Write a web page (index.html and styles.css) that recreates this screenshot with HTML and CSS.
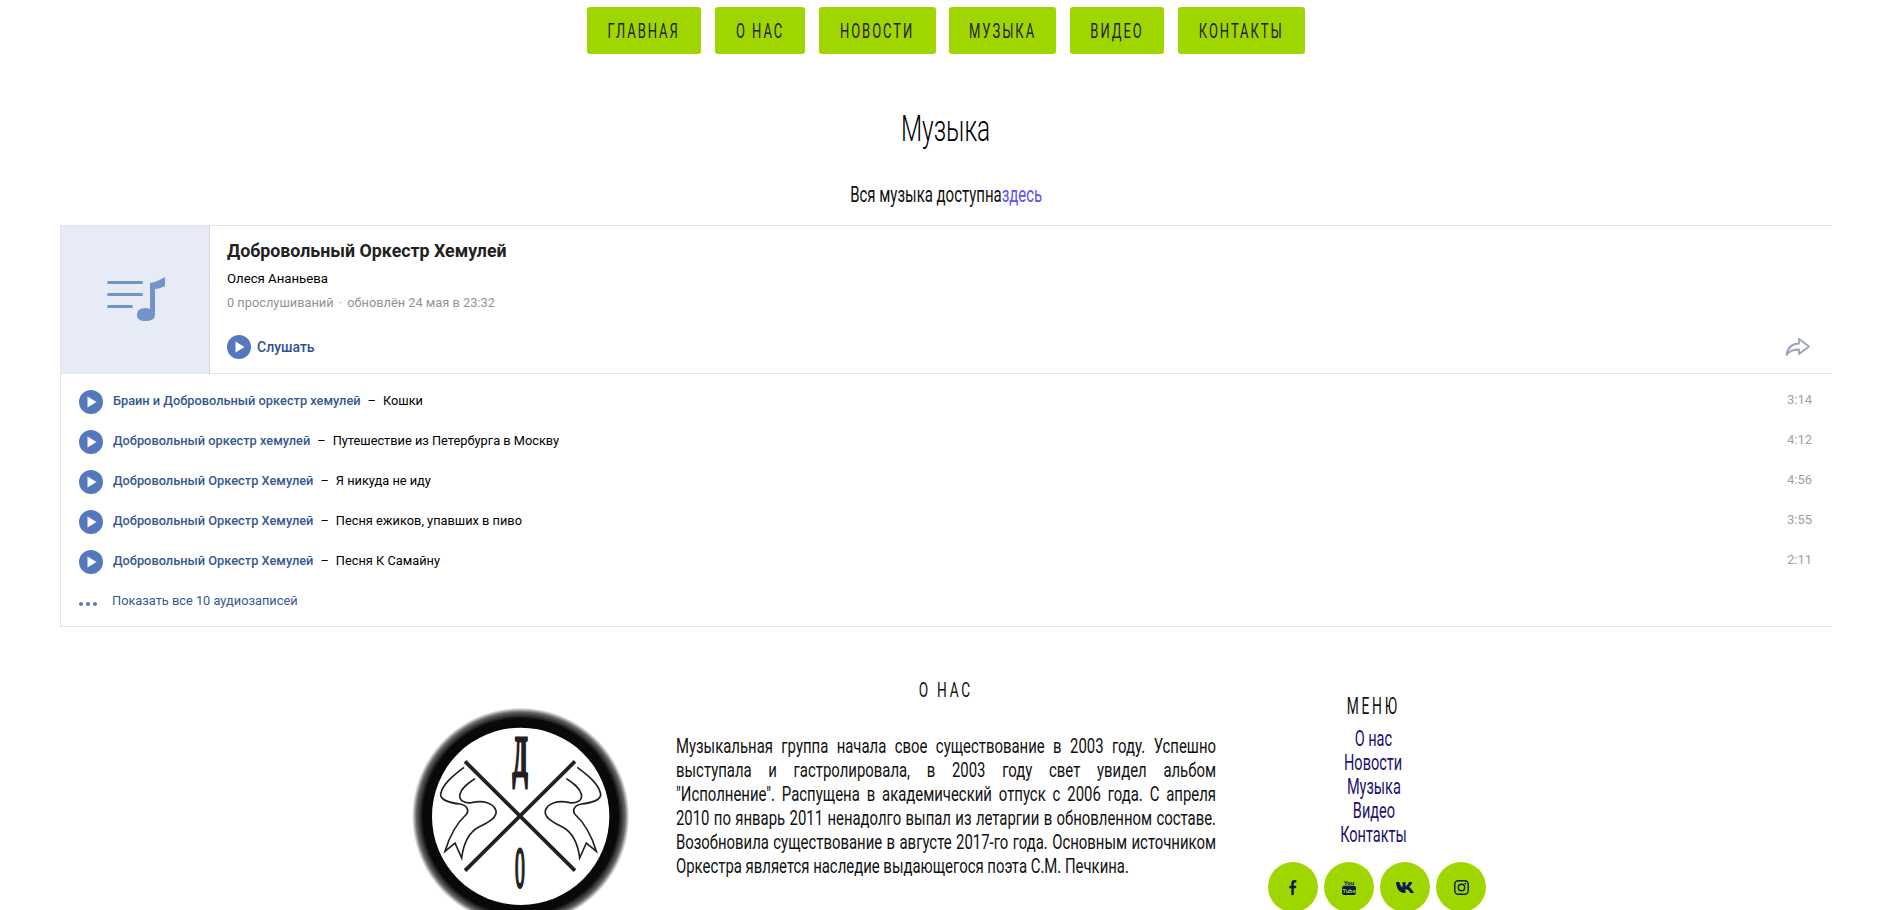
FILE: index.html
```html
<!DOCTYPE html>
<html lang="ru">
<head>
<meta charset="utf-8">
<title>Музыка</title>
<link rel="stylesheet" href="styles.css">
</head>
<body>
<nav class="nav">
  <a class="nav-btn"><span class="cond">ГЛАВНАЯ</span></a>
  <a class="nav-btn"><span class="cond">О НАС</span></a>
  <a class="nav-btn"><span class="cond">НОВОСТИ</span></a>
  <a class="nav-btn"><span class="cond">МУЗЫКА</span></a>
  <a class="nav-btn"><span class="cond">ВИДЕО</span></a>
  <a class="nav-btn"><span class="cond">КОНТАКТЫ</span></a>
</nav>
<h1 class="title"><span class="cond">Музыка</span></h1>
<p class="lead"><span class="cond">Вся музыка доступна<a class="lead-link">здесь</a></span></p>

<section class="widget">
  <div class="album">
    <div class="cover">
      <svg width="60" height="46" viewBox="0 0 60 46" class="cover-icon">
        <g fill="#7293cc">
          <rect x="0" y="4" width="36" height="3" rx="1.5"/>
          <rect x="0" y="16" width="36" height="3" rx="1.5"/>
          <rect x="0" y="28" width="26" height="3" rx="1.5"/>
          <path d="M43 6 Q50 5 58 0 V9 Q52 12 48 12 V38 Q48 44 38 44 Q30 44 30 38 Q30 31 38 31 Q41 31 43 32 Z"/>
        </g>
      </svg>
    </div>
    <div class="album-info">
      <div class="album-title">Добровольный Оркестр Хемулей</div>
      <div class="album-author">Олеся Ананьева</div>
      <div class="album-stats">0 прослушиваний <span class="dot">·</span> обновлён 24 мая в 23:32</div>
      <div class="album-foot">
        <span class="listen">
          <svg class="play" width="24" height="24" viewBox="0 0 24 24"><circle cx="12" cy="12" r="12" fill="#5578bd"/><path d="M8.5 6.5 L17.5 12 L8.5 17.5 Z" fill="#fff"/></svg>
          Слушать
        </span>
        <svg class="share" width="26" height="20" viewBox="0 0 26 20"><path d="M14 2 L24 9.5 L14 17 V12.5 C8 12.5 4 14 1.5 18 C2.5 11 7 6.8 14 6.5 Z" fill="none" stroke="#9aa3b8" stroke-width="1.8" stroke-linejoin="round"/></svg>
      </div>
    </div>
  </div>
  <ul class="tracks">
    <li class="track">
      <svg class="play" width="24" height="24" viewBox="0 0 24 24"><circle cx="12" cy="12" r="12" fill="#5578bd"/><path d="M8.5 6.5 L17.5 12 L8.5 17.5 Z" fill="#fff"/></svg>
      <span class="artist">Браин и Добровольный оркестр хемулей</span><span class="sep">–</span><span class="song">Кошки</span><span class="time">3:14</span>
    </li>
    <li class="track">
      <svg class="play" width="24" height="24" viewBox="0 0 24 24"><circle cx="12" cy="12" r="12" fill="#5578bd"/><path d="M8.5 6.5 L17.5 12 L8.5 17.5 Z" fill="#fff"/></svg>
      <span class="artist">Добровольный оркестр хемулей</span><span class="sep">–</span><span class="song">Путешествие из Петербурга в Москву</span><span class="time">4:12</span>
    </li>
    <li class="track">
      <svg class="play" width="24" height="24" viewBox="0 0 24 24"><circle cx="12" cy="12" r="12" fill="#5578bd"/><path d="M8.5 6.5 L17.5 12 L8.5 17.5 Z" fill="#fff"/></svg>
      <span class="artist">Добровольный Оркестр Хемулей</span><span class="sep">–</span><span class="song">Я никуда не иду</span><span class="time">4:56</span>
    </li>
    <li class="track">
      <svg class="play" width="24" height="24" viewBox="0 0 24 24"><circle cx="12" cy="12" r="12" fill="#5578bd"/><path d="M8.5 6.5 L17.5 12 L8.5 17.5 Z" fill="#fff"/></svg>
      <span class="artist">Добровольный Оркестр Хемулей</span><span class="sep">–</span><span class="song">Песня ежиков, упавших в пиво</span><span class="time">3:55</span>
    </li>
    <li class="track">
      <svg class="play" width="24" height="24" viewBox="0 0 24 24"><circle cx="12" cy="12" r="12" fill="#5578bd"/><path d="M8.5 6.5 L17.5 12 L8.5 17.5 Z" fill="#fff"/></svg>
      <span class="artist">Добровольный Оркестр Хемулей</span><span class="sep">–</span><span class="song">Песня К Самайну</span><span class="time">2:11</span>
    </li>
  </ul>
  <div class="more">
    <svg class="dots" width="18" height="4" viewBox="0 0 18 4"><g fill="#5578bd"><circle cx="2" cy="2" r="2"/><circle cx="9" cy="2" r="2"/><circle cx="16" cy="2" r="2"/></g></svg>
    <a class="more-link">Показать все 10 аудиозаписей</a>
  </div>
</section>

<footer class="footer">
  <div class="about">
    <h2 class="about-title"><span class="cond">О НАС</span></h2>
    <div class="about-body">
      <svg class="logo" width="240" height="240" viewBox="0 0 720 720">
        <defs>
          <radialGradient id="ring" gradientUnits="userSpaceOnUse" cx="362" cy="385" r="326">
            <stop offset="0" stop-color="#000"/>
            <stop offset="0.9" stop-color="#0a0808"/>
            <stop offset="0.96" stop-color="#666"/>
            <stop offset="1" stop-color="#fff"/>
          </radialGradient>
          <path id="ribbon" d="M192 238 C160 262 128 288 122 318 C120 336 150 345 180 348 C200 352 208 365 200 378 C170 405 150 440 135 490 L165 465 L185 510 C190 470 205 435 235 418 C265 402 292 390 288 368 C280 345 250 336 215 344 C190 348 176 335 180 318 C186 298 205 285 225 272"/>
        </defs>
        <circle cx="362" cy="385" r="326" fill="url(#ring)"/>
        <circle cx="362" cy="385" r="266" fill="#fff"/>
        <g stroke="#231f20" stroke-width="11" fill="none">
          <path d="M195 220 L525 548"/>
          <path d="M525 220 L195 548"/>
        </g>
        <g fill="none" stroke="#231f20" stroke-width="5">
          <use href="#ribbon"/>
          <use href="#ribbon" transform="matrix(-1 0 0 1 724 0)"/>
        </g>
        <text class="logo-letter" transform="translate(360 265) scale(.35 .9)" text-anchor="middle">Д</text>
        <text class="logo-letter" transform="translate(360 598) scale(.2 .9)" text-anchor="middle">О</text>
      </svg>
      <div class="about-text">
        <span class="about-line">Музыкальная группа начала свое существование в 2003 году. Успешно</span>
        <span class="about-line">выступала и гастролировала, в 2003 году свет увидел альбом</span>
        <span class="about-line">"Исполнение". Распущена в академический отпуск с 2006 года. С апреля</span>
        <span class="about-line">2010 по январь 2011 ненадолго выпал из летаргии в обновленном составе.</span>
        <span class="about-line">Возобновила существование в августе 2017-го года. Основным источником</span>
        <span class="about-line about-last">Оркестра является наследие выдающегося поэта С.М. Печкина.</span>
      </div>
    </div>
  </div>
  <div class="side">
    <h3 class="side-title"><span class="cond">МЕНЮ</span></h3>
    <ul class="side-menu">
      <li><span class="cond">О нас</span></li>
      <li><span class="cond">Новости</span></li>
      <li><span class="cond">Музыка</span></li>
      <li><span class="cond">Видео</span></li>
      <li><span class="cond">Контакты</span></li>
    </ul>
    <div class="social">
      <a class="social-btn">
        <svg width="8" height="15" viewBox="0 0 12 18" preserveAspectRatio="none"><path d="M3.5 18 V10 H.5 V7 H3.5 V4.5 C3.500 1.500 5 0 8 0 H11 V3 H9 C7.700 3 7.200 3.500 7.200 4.700 V7 H11 L10.500 10 H7.200 V18 Z" fill="#0c1b4d"/></svg>
      </a>
      <a class="social-btn">
        <svg width="14" height="16" viewBox="0 0 16 18"><text class="yt-top" x="8" y="6.500" text-anchor="middle">You</text><rect x="0" y="7.500" width="16" height="10.500" rx="2.500" fill="#0c1b4d"/><text class="yt-bottom" x="8" y="15.500" text-anchor="middle">Tube</text></svg>
      </a>
      <a class="social-btn">
        <svg width="18" height="11" viewBox="0 0 18 11"><path d="M0 0 H3.300 C3.800 2.500 5.300 5 6.500 5.500 V0 H9.500 V4.200 C10.800 4 12.300 2 13 0 H16.300 C15.800 2.300 14.200 4 13 4.900 C14.500 5.800 16.500 7.700 18 11 H14.400 C13.500 8.800 11.700 7.200 9.500 7 V11 H8.700 C3.500 11 .500 7 0 0 Z" fill="#0c1b4d"/></svg>
      </a>
      <a class="social-btn">
        <svg width="15" height="15" viewBox="0 0 15 15"><rect x=".8" y=".8" width="13.400" height="13.400" rx="3.500" fill="none" stroke="#0c1b4d" stroke-width="1.400"/><circle cx="7.500" cy="7.500" r="3.200" fill="none" stroke="#0c1b4d" stroke-width="1.400"/><circle cx="11.400" cy="3.600" r=".9" fill="#0c1b4d"/></svg>
      </a>
    </div>
  </div>
</footer>
</body>
</html>
```
FILE: styles.css
```css
html, body { margin: 0; padding: 0; height: 910px; overflow: hidden; background: #fff; }
body { font-family: Roboto, sans-serif; color: #222; }
ul { list-style: none; margin: 0; padding: 0; }

/* No condensed face is installed, so the headline face is narrowed from Roboto. */
.cond { display: inline-block; white-space: nowrap; transform: scaleX(var(--k, .65)); }

.nav { display: grid; grid-template-columns: 114px 90px 117px 107px 94px 127px; justify-content: center; column-gap: 13.9px; padding-top: 7px; margin-left: 3px; }
.nav-btn { display: flex; align-items: center; justify-content: center; height: 47px; background: #a0d600; border-radius: 3px; font-size: 20px; letter-spacing: 3px; color: #222; }

.title { margin: 53px 0 0 3px; font-size: 37px; line-height: 44px; font-weight: 300; text-align: center; color: #000; --k: .66; }
.lead { margin: 32px 0 0 3px; font-size: 22px; line-height: 24px; text-align: center; color: #111; --k: .68; }
.lead-link { color: #5b52f5; }

.widget { margin: 18px 57px 0 60px; border: 1px solid #e3e5e9; border-right: 0; height: 400px; }
.album { display: flex; height: 147px; border-bottom: 1px solid #e3e5e9; }
.cover { width: 148px; flex: none; background: #e7ebf5; border-right: 1px solid #cdd5e6; display: flex; align-items: center; justify-content: center; }
.cover-icon { display: block; margin-left: 4px; }
.album-info { flex: 1; padding: 14px 21px 0 17px; }
.album-title { font-size: 17.800px; line-height: 22px; font-weight: 700; color: #222; }
.album-author { margin-top: 8px; font-size: 13.200px; line-height: 17px; color: #000; }
.album-stats { margin-top: 7px; font-size: 12.800px; line-height: 17px; color: #939393; }
.dot { color: #b0b0b0; margin: 0 2px; }
.album-foot { display: flex; justify-content: space-between; align-items: center; margin-top: 24px; }
.listen { display: flex; align-items: center; gap: 6px; font-size: 14px; font-weight: 500; color: #2f5191; }
.play { display: block; flex: none; }
.share { display: block; }

.tracks { padding: 8px 20px 0 18px; }
.track { display: flex; align-items: center; height: 40px; font-size: 12.800px; color: #000; }
.artist { margin-left: 10px; margin-top: -3px; font-weight: 500; color: #36578f; }
.sep { margin: -3px 7px 0; }
.song { color: #000; margin-top: -3px; }
.time { margin-left: auto; font-size: 13px; color: #a0a0a0; margin-top: -6px; }
.more { display: flex; align-items: center; padding: 11px 0 0 18px; font-size: 12.800px; color: #36578f; }
.dots { margin-top: 7px; }
.more-link { margin-left: 15px; }

.footer { display: flex; margin-left: 412px; margin-top: 50px; }
.about { width: 804px; }
.about-title { margin: 0 0 0 264px; font-size: 21px; line-height: 26px; font-weight: 400; letter-spacing: 4.300px; text-align: center; color: #111; }
.about-body { display: flex; gap: 48px; margin-top: 7px; }
.logo { display: block; flex: none; margin: -22px -12px 0; }
.logo-letter { font-family: "Liberation Serif", serif; font-weight: 700; font-size: 190px; fill: #231f20; stroke: #231f20; stroke-width: 10px; }
.about-text { margin-top: 24px; width: 540px; font-size: 20px; line-height: 24px; color: #111; --k: .745; }
.about-line { display: block; width: calc(540px / var(--k)); white-space: nowrap; transform: scaleX(var(--k)); transform-origin: 0 0; text-align: justify; text-align-last: justify; }
.about-last { text-align-last: left; }

.side { width: 218px; margin-left: 52px; padding-top: 17px; text-align: center; }
.side-title { margin: 0 7px 0 0; font-size: 23px; line-height: 26px; font-weight: 400; letter-spacing: 4.600px; color: #111; --k: .6; }
.side-menu { margin: 7px 7px 0 0; font-size: 22px; line-height: 24px; color: #1c1270; --k: .66; }
.social { display: flex; gap: 6px; margin-top: 15px; }
.social-btn { display: flex; align-items: center; justify-content: center; width: 50px; height: 50px; border-radius: 50%; background: #a0d600; }
.yt-top { font-family: Roboto, sans-serif; font-size: 7px; font-weight: 700; fill: #0c1b4d; }
.yt-bottom { font-family: Roboto, sans-serif; font-size: 7px; font-weight: 700; fill: #a0d600; }
```
